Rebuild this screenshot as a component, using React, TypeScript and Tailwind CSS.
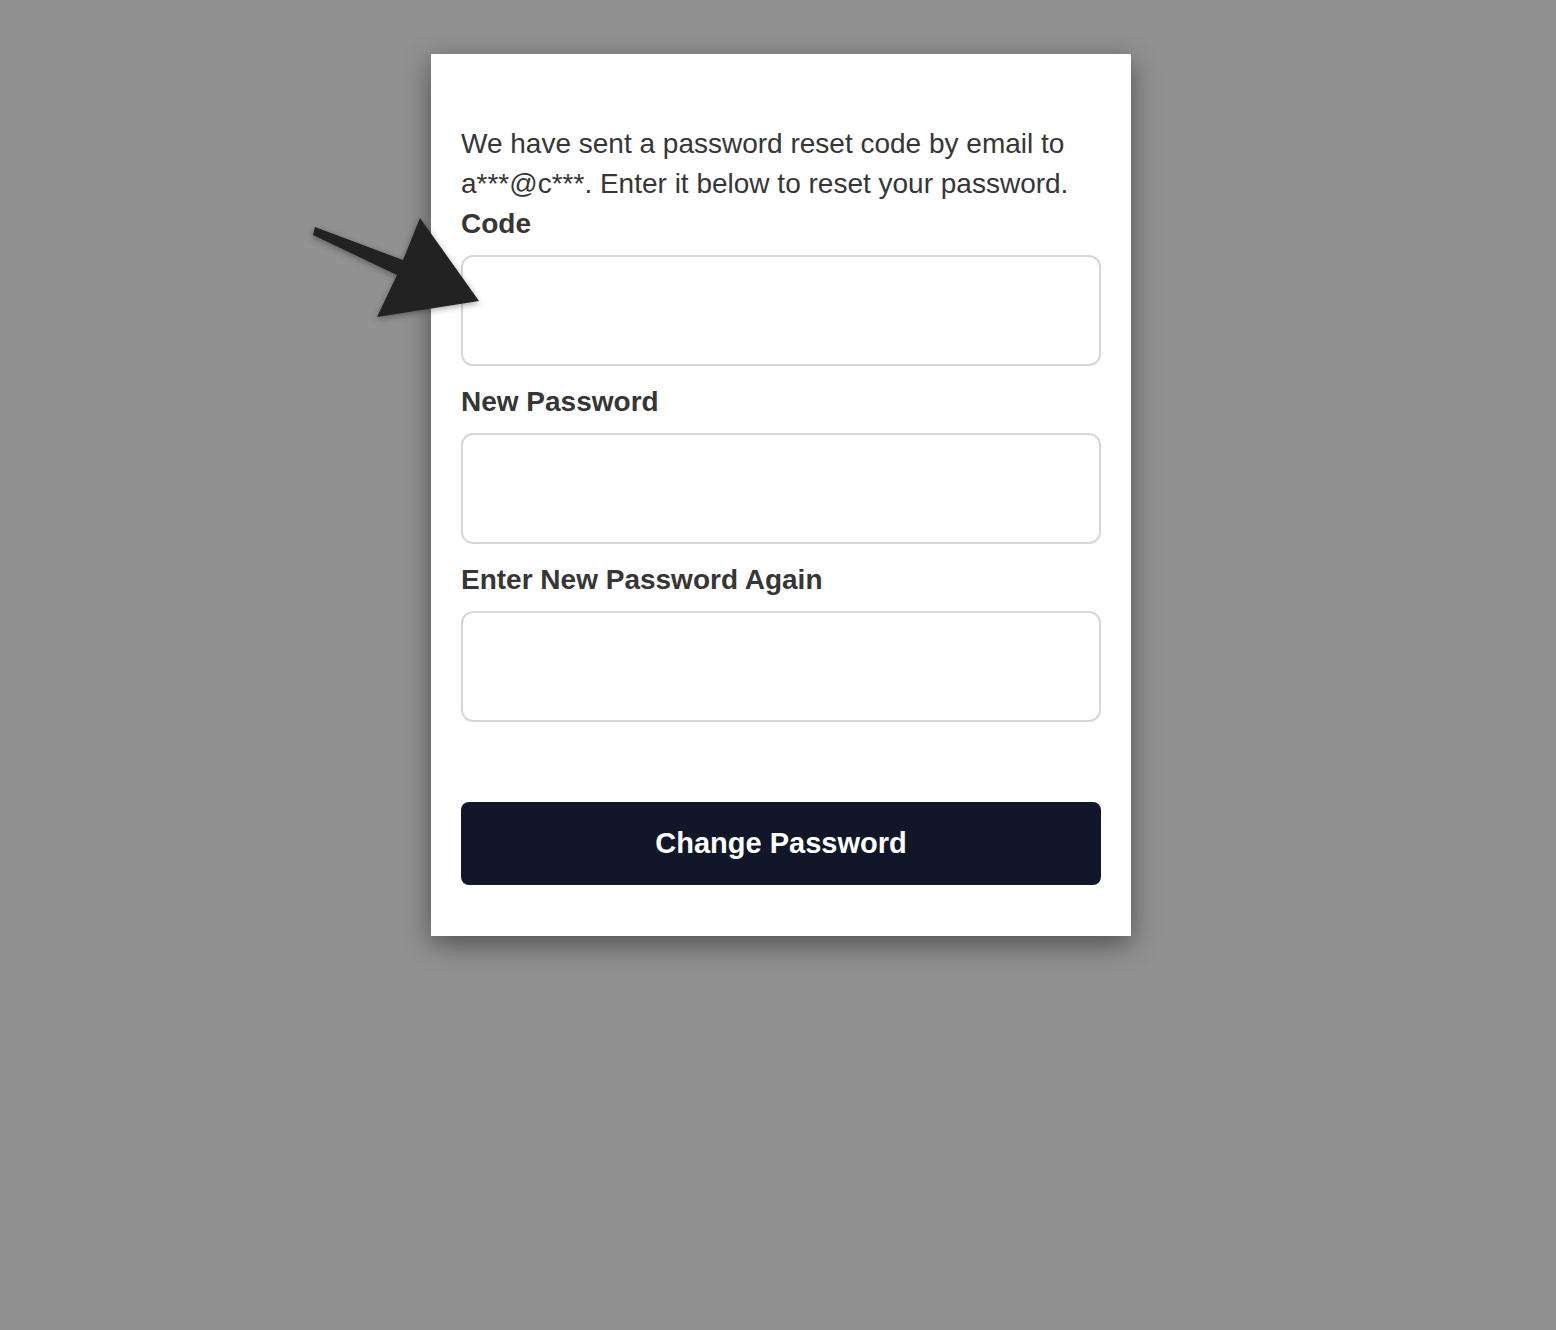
import React, { useState } from "react";

// Reset-password form with a pointer arrow drawn over the page
const fields = [
  { id: "code", label: "Code", type: "text" },
  { id: "password", label: "New Password", type: "password" },
  { id: "confirm", label: "Enter New Password Again", type: "password" },
];

const PointerArrow = () => (
  <svg
    className="absolute left-[300px] top-[210px] drop-shadow-[0_2px_3px_rgba(0,0,0,0.35)]"
    width="190"
    height="120"
    viewBox="0 0 190 120"
  >
    {/* shaft + head, coords relative to (300,210) */}
    <polygon
      fill="#222222"
      points="15,17 13,25 97,65 77,107 179,91 120,8 103,50"
    />
  </svg>
);

const App: React.FC = () => {
  const [values, setValues] = useState<Record<string, string>>({});

  return (
    <div
      className="relative min-h-screen bg-[#919191] pt-[54px]"
      style={{ fontFamily: '"Liberation Sans", Arial, Helvetica, sans-serif' }}
    >
      <div className="ml-[431px] w-[700px] bg-white px-[30px] pt-[70px] pb-[51px] shadow-[0_8px_26px_rgba(0,0,0,0.45)]">
        <p className="text-[28px] leading-[40px] text-[#363636]">
          We have sent a password reset code by email to a***@c***. Enter it
          below to reset your password.
        </p>

        {fields.map((f, i) => (
          <div key={f.id} className={i === 0 ? "" : "mt-4"}>
            <label
              htmlFor={f.id}
              className="block text-[28px] font-bold leading-[40px] text-[#363636]"
            >
              {f.label}
            </label>
            <input
              id={f.id}
              type={f.type}
              value={values[f.id] ?? ""}
              onChange={(e) => setValues({ ...values, [f.id]: e.target.value })}
              className="mt-[11px] block h-[111px] w-full rounded-xl border-2 border-[#d4d7de] bg-white px-4 text-[28px] outline-none"
            />
          </div>
        ))}

        <button className="mt-[80px] block h-[83px] w-full rounded-lg bg-[#111729] text-[29px] font-bold text-white">
          Change Password
        </button>
      </div>

      <PointerArrow />
    </div>
  );
};

export default App;
